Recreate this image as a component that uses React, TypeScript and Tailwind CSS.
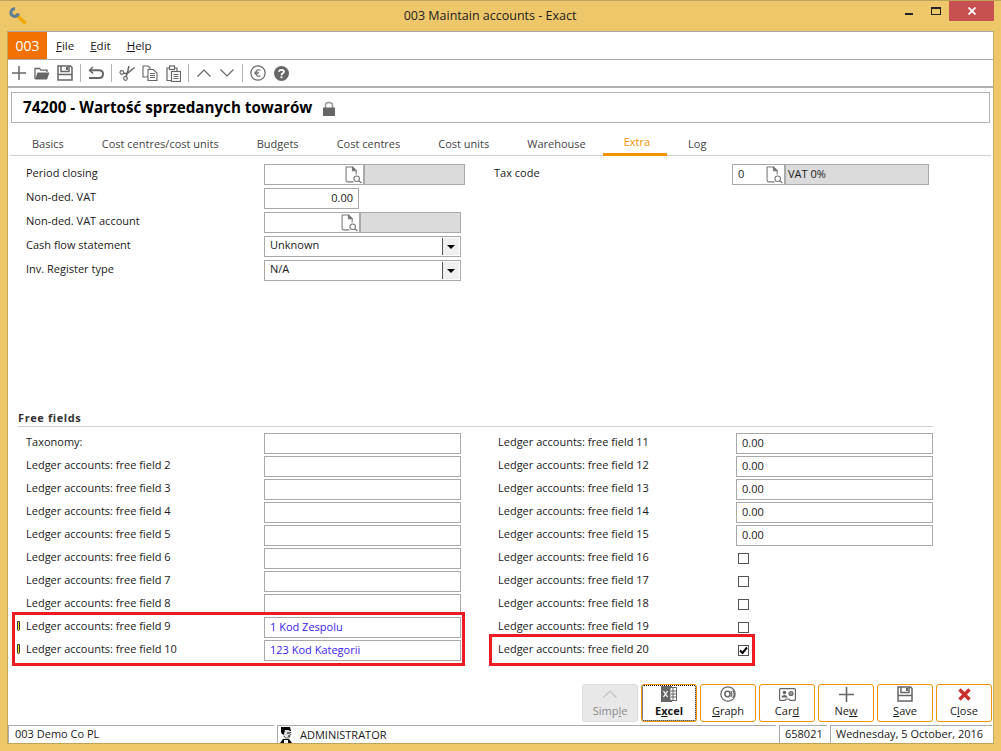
import React from 'react';

const Wrench = () => (
    <svg width="18" height="18" viewBox="0 0 18 18">
        <path d="M7.5 8 L15.5 15.5" stroke="#f0ab00" strokeWidth="3.6" strokeLinecap="round" />
        <path d="M6 1.8 A3.8 3.8 0 1 0 9.4 6.4" fill="none" stroke="#5f7d99" strokeWidth="3" />
    </svg>
);

const PlusIcon = ({ size = 14 }: { size?: number }) => (
    <svg width={size} height={size} viewBox="0 0 14 14">
        <path d="M7 0 V14 M0 7 H14" stroke="#666" strokeWidth="1.5" />
    </svg>
);

const FolderIcon = () => (
    <svg width="16" height="13" viewBox="0 0 16 13" fill="none" stroke="#666" strokeWidth="1.3">
        <path d="M1 12 V1.5 H5.5 L7 3.2 H13 V5" />
        <path d="M1 12.5 L3.5 5.5 H15.5 L13 12.5 Z" fill="#666" stroke="none" />
    </svg>
);

const SaveIcon = ({ size = 16 }: { size?: number }) => (
    <svg width={size} height={size} viewBox="0 0 16 16" fill="none" stroke="#666" strokeWidth="1.5">
        <path d="M1 1 H13.5 L15 2.5 V15 H1 Z" />
        <path d="M4 1 V6.5 H12 V1" />
        <path d="M1 9.5 H15" />
        <rect x="9" y="2" width="2" height="3" fill="#666" stroke="none" />
    </svg>
);

const UndoIcon = () => (
    <svg width="16" height="14" viewBox="0 0 16 14" fill="none" stroke="#666" strokeWidth="2">
        <path d="M5 1 L1.5 4.2 L5 7.4" strokeWidth="1.5" />
        <path d="M2 4.2 H11 C13.5 4.2 15 5.8 15 8 C15 10.4 13.5 12 11 12 H1" />
    </svg>
);

const ScissorsIcon = () => (
    <svg width="16" height="16" viewBox="0 0 16 16" fill="none" stroke="#666" strokeWidth="1.2">
        <circle cx="2.8" cy="7.5" r="1.8" />
        <circle cx="6.5" cy="13.5" r="1.8" />
        <path d="M4.5 8.2 L8 8.6 L15.5 2.5" strokeWidth="1.5" />
        <path d="M7 11.8 L8.2 8.4 L10 1" strokeWidth="1.5" />
    </svg>
);

const CopyIcon = () => (
    <svg width="16" height="16" viewBox="0 0 16 16" fill="none" stroke="#666" strokeWidth="1.1">
        <path d="M1 1 H6 L8 3 V12 H1 Z" />
        <path d="M6 4.5 H11 L15 8 V15.5 H6 Z" fill="#fff" />
        <path d="M8 8.5 H13 M8 10.5 H13 M8 12.5 H13" />
    </svg>
);

const PasteIcon = () => (
    <svg width="15" height="17" viewBox="0 0 15 17" fill="none" stroke="#666" strokeWidth="1.2">
        <path d="M3 3 H1 V15.5 H5 M9 3 H11 V6" />
        <rect x="3.5" y="1" width="5" height="3.5" fill="#fff" />
        <rect x="5.5" y="6.5" width="9" height="10" fill="#fff" />
        <path d="M7.5 9.5 H12.5 M7.5 11.5 H12.5 M7.5 13.5 H12.5" />
    </svg>
);

const ChevronIcon = ({ down, color = '#666' }: { down?: boolean; color?: string }) => (
    <svg width="14" height="8" viewBox="0 0 14 8" fill="none" stroke={color} strokeWidth="1.2">
        <path d={down ? 'M0.5 0.5 L7 7 L13.5 0.5' : 'M0.5 7.5 L7 1 L13.5 7.5'} />
    </svg>
);

const EuroCircle = () => (
    <svg width="16" height="16" viewBox="0 0 17 17" fill="none" stroke="#666" strokeWidth="1.3">
        <circle cx="8.5" cy="8.5" r="7.6" />
        <path d="M11 5.6 C8.5 4.2 6 6 6 8.5 C6 11 8.5 12.8 11 11.4 M4.6 7.6 H9.6 M4.6 9.4 H9" strokeWidth="1.1" />
    </svg>
);

const HelpCircle = () => (
    <svg width="15" height="15" viewBox="0 0 16 16">
        <circle cx="8" cy="8" r="8" fill="#666" />
        <path d="M5.4 6.2 C5.4 3.4 10.6 3.4 10.6 6.2 C10.6 7.8 8 7.8 8 9.8" fill="none" stroke="#fff" strokeWidth="2" />
        <rect x="7" y="11" width="2" height="2" fill="#fff" />
    </svg>
);

const LockIcon = () => (
    <svg width="12" height="15" viewBox="0 0 12 15" className="mt-[2px]">
        <path d="M2.5 7 V4 C2.5 0.5 9.5 0.5 9.5 4 V7" fill="none" stroke="#999" strokeWidth="1.5" />
        <rect x="0" y="6.5" width="12" height="8.5" fill="#666" />
    </svg>
);

const LookupIcon = () => (
    <svg width="17" height="18" viewBox="0 0 16 17" fill="none" stroke="#777" strokeWidth="1">
        <path d="M8 15 H2.5 C1.7 15 1 14.4 1 13.6 V1 H7 L10.5 4.5 V8" />
        <path d="M7 1 V4.5 H10.5 Z" fill="#777" />
        <circle cx="11" cy="12" r="2.6" />
        <path d="M13 14 L15.5 16" strokeWidth="1.3" />
    </svg>
);

const ExcelIcon = () => (
    <svg width="16" height="16" viewBox="0 0 16 16">
        <rect x="0" y="0" width="11" height="16" fill="#666" />
        <rect x="9" y="1.5" width="6.5" height="13" fill="#fff" stroke="#666" />
        <path d="M10 5 H15 M10 8 H15 M10 11 H15 M12 2 V14" stroke="#666" />
        <path d="M2.5 5 L6.5 11 M6.5 5 L2.5 11" stroke="#fff" strokeWidth="1.3" />
    </svg>
);

const GraphIcon = () => (
    <svg width="16" height="16" viewBox="0 0 17 17" fill="none" stroke="#666" strokeWidth="1.3">
        <circle cx="8.5" cy="8.5" r="7.6" />
        <circle cx="8" cy="8.5" r="2.8" strokeWidth="1.6" />
        <path d="M11.5 5.5 C13 7 13 10 11.5 11.5 M13.5 4.5 C15.5 7 15.5 10 13.5 12.5" />
    </svg>
);

const CardIcon = () => (
    <svg width="17" height="13" viewBox="0 0 17 13" fill="none" stroke="#666" strokeWidth="1.2">
        <path d="M0.6 1.5 Q0.6 0.6 1.5 0.6 H15.5 Q16.4 0.6 16.4 1.5 V11.5 Q16.4 12.4 15.5 12.4 H11 L10 11 H7 L6 12.4 H1.5 Q0.6 12.4 0.6 11.5 Z" />
        <circle cx="5.5" cy="4.5" r="1.8" fill="#666" stroke="none" />
        <path d="M2.5 9.5 C2.5 6 8.5 6 8.5 9.5 Z" fill="#666" stroke="none" />
        <circle cx="12" cy="5.5" r="2" fill="#999" />
    </svg>
);

const CloseIcon = () => (
    <svg width="13" height="13" viewBox="0 0 13 13">
        <path d="M1.5 1.5 L11.5 11.5 M11.5 1.5 L1.5 11.5" stroke="#c9302c" strokeWidth="3.4" />
    </svg>
);

const UserIcon = () => (
    <svg width="13" height="16" viewBox="0 0 13 16">
        <path d="M3 2 H10 L11 7 L9 11 H5 L3 7 Z" fill="#ddd" stroke="#000" strokeDasharray="1 1" />
        <path d="M1 0 H10 L11 4 L8 3 H5 L4 7 H2 L1 5 Z" fill="#000" />
        <path d="M7 6 H10 M8 9 H10" stroke="#000" />
        <path d="M0 16 L3 12 H9 L12 16 Z" fill="#000" />
        <path d="M4 13 H8 V16 H4 Z" fill="#fff" />
    </svg>
);

const Sep = () => <div className="w-px h-[18px] bg-[#b0b0b0] mx-[7px]" />;

const Input = ({ w, value, right, blue }: { w: string; value?: string; right?: boolean; blue?: boolean }) => (
    <div
        className={`${w} h-[21px] shrink-0 border border-[#a9a9a9] bg-white px-[5px] flex items-center ${right ? 'justify-end' : ''} ${blue ? 'text-[#3b22f0]' : ''}`}
    >
        {value}
    </div>
);

const Lookup = ({ w, value }: { w: string; value?: string }) => (
    <div className={`${w} h-[21px] shrink-0 border border-[#a9a9a9] bg-white pl-[5px] pr-px flex items-center justify-between`}>
        <span>{value}</span>
        <LookupIcon />
    </div>
);

const Grey = ({ w, value }: { w: string; value?: string }) => (
    <div className={`${w} h-[21px] shrink-0 border border-[#a9a9a9] bg-[#dbdbdb] px-[2px] flex items-center`}>{value}</div>
);

const Select = ({ value }: { value: string }) => (
    <div className="w-[197px] h-[21px] border border-[#a9a9a9] bg-white pl-[5px] flex items-center justify-between">
        <span className="-mt-[2px]">{value}</span>
        <div className="w-[17px] h-[17px] mr-px flex items-center justify-center bg-[#f0f0f0] border-l border-[#555]">
            <div className="w-0 h-0 border-l-[4px] border-r-[4px] border-t-[4px] border-l-transparent border-r-transparent border-t-black" />
        </div>
    </div>
);

const Row = ({ label, mark, children }: { label: string; mark?: boolean; children: React.ReactNode }) => (
    <div className="flex items-center h-[21px]">
        <div className="relative w-[246px] pl-[8px] -mt-[2px]">
            {mark && <span className="absolute left-[-1px] top-[3px] w-[3px] h-[10px] bg-[#f2e200] border border-[#333] rounded-b-full" />}
            {label}
        </div>
        {children}
    </div>
);

const RightRow = ({ label, children }: { label: string; children: React.ReactNode }) => (
    <div className="flex items-center h-[21px]">
        <div className="w-[238px] -mt-[2px]">{label}</div>
        {children}
    </div>
);

const Check = ({ checked }: { checked?: boolean }) => (
    <div className="ml-[2px] w-[11px] h-[11px] border border-[#555] bg-white flex items-center justify-center">
        {checked && (
            <svg width="9" height="9" viewBox="0 0 9 9">
                <path d="M1 4.5 L3.5 7 L8 1.5" fill="none" stroke="#000" strokeWidth="2" />
            </svg>
        )}
    </div>
);

const ActionButton = ({ icon, children, disabled, focused }: { icon: React.ReactNode; children: React.ReactNode; disabled?: boolean; focused?: boolean }) => (
    <div
        className={`w-[56px] h-[38px] rounded-[3px] border flex flex-col items-center ${
            disabled ? 'border-[#dcdcdc] bg-[#e8e8e8] text-[#8a8a8a]' : 'border-[#f39200] bg-white'
        } ${focused ? 'outline-1 outline-dotted outline-black -outline-offset-2 font-bold' : ''}`}
    >
        <div className="h-[18px] flex items-center justify-center">{icon}</div>
        <div className="leading-[15px]">{children}</div>
    </div>
);

const tabs = ['Basics', 'Cost centres/cost units', 'Budgets', 'Cost centres', 'Cost units', 'Warehouse', 'Extra', 'Log'];

export default function App() {
    return (
        <div className="w-[1001px] h-[751px] bg-[#efc76b] border-t border-[#c0a35a] flex flex-col overflow-hidden text-[11px] text-[#1a1a1a] font-['Open_Sans',sans-serif]">
            {/* title bar */}
            <div className="h-[30px] shrink-0 relative flex items-start">
                <div className="pl-[9px] pt-[6px]">
                    <Wrench />
                </div>
                <div className="absolute left-0 right-[21px] top-[6px] text-center text-[12.5px] leading-[18px] text-[#222]">003 Maintain accounts - Exact</div>
                <div className="ml-auto mr-[7px] flex items-start">
                    <div className="w-[8px] h-[2px] bg-[#222] mt-[12px] mr-[18px]" />
                    <div className="w-[10px] h-[8px] border border-t-2 border-[#222] mt-[6px] mr-[8px]" />
                    <div className="w-[45px] h-[20px] bg-[#c75050] text-white flex items-center justify-center">
                        <svg width="8" height="8" viewBox="0 0 8 8">
                            <path d="M0.5 0.5 L7.5 7.5 M7.5 0.5 L0.5 7.5" stroke="#fff" strokeWidth="1.8" />
                        </svg>
                    </div>
                </div>
            </div>

            {/* window body */}
            <div className="flex-1 mx-[7px] mb-[7px] border-t border-x border-b border-t-[#a8a8a8] border-x-[#c8a85c] border-b-[#c0a35a] bg-white flex flex-col min-h-0">
                {/* menu */}
                <div className="h-[28px] shrink-0 flex items-stretch border-b border-[#ababab]">
                    <div className="w-[39px] h-[27px] bg-[#f27100] text-white text-[14px] flex items-center justify-center">003</div>
                    <div className="flex items-center gap-[16px] pl-[9px] text-[11.5px]">
                        <span><u>F</u>ile</span>
                        <span><u>E</u>dit</span>
                        <span><u>H</u>elp</span>
                    </div>
                </div>

                {/* toolbar */}
                <div className="h-[28px] shrink-0 flex items-center pl-[4px] border-b-2 border-[#b0b0b0]">
                    <div className="mr-[8px] flex"><PlusIcon /></div>
                    <div className="mr-[7px] flex"><FolderIcon /></div>
                    <SaveIcon />
                    <Sep />
                    <UndoIcon />
                    <Sep />
                    <div className="mr-[7px] flex"><ScissorsIcon /></div>
                    <div className="mr-[8px] flex"><CopyIcon /></div>
                    <PasteIcon />
                    <Sep />
                    <div className="ml-px mr-[9px] flex"><ChevronIcon /></div>
                    <ChevronIcon down />
                    <div className="w-px h-[18px] bg-[#b0b0b0] ml-[8px] mr-[7px]" />
                    <div className="mr-[8px] flex"><EuroCircle /></div>
                    <HelpCircle />
                </div>

                {/* heading */}
                <div className="h-[31px] shrink-0 mx-[3px] mt-[4px] border border-[#b0b0b0] flex items-center pl-[11px] gap-[11px] text-[15.2px] font-bold text-black">
                    <span>74200 - Wartość sprzedanych towarów</span>
                    <LockIcon />
                </div>

                {/* tabs */}
                <div className="h-[23px] shrink-0 mt-[10px] mx-[2px] flex items-end border-b border-[#cfcfcf] text-[#444]">
                    <div className="flex pl-[3px]">
                        {tabs.map((t) => (
                            <div
                                key={t}
                                className={`h-[23px] flex items-center -mb-px ${t === 'Extra' ? '-ml-[2px] mr-[2px] pl-[21px] pr-[17px] border-b-[3px] border-[#f39200] text-[#f39200] pb-px' : 'px-[19px]'}`}
                            >
                                {t}
                            </div>
                        ))}
                    </div>
                </div>

                {/* top form */}
                <div className="h-[255px] shrink-0 pt-[8px] pl-[10px] flex">
                    <div className="flex flex-col gap-[3px] w-[466px]">
                        <Row label="Period closing">
                            <Lookup w="w-[100px]" />
                            <Grey w="w-[101px]" />
                        </Row>
                        <Row label="Non-ded. VAT">
                            <Input w="w-[95px]" value="0.00" right />
                        </Row>
                        <Row label="Non-ded. VAT account">
                            <Lookup w="w-[96px]" />
                            <Grey w="w-[101px]" />
                        </Row>
                        <Row label="Cash flow statement">
                            <Select value="Unknown" />
                        </Row>
                        <Row label="Inv. Register type">
                            <Select value="N/A" />
                        </Row>
                    </div>
                    <div className="flex h-[21px] items-center">
                        <div className="w-[248px] pl-[10px] -mt-[2px]">Tax code</div>
                        <Lookup w="w-[53px]" value="0" />
                        <Grey w="w-[144px]" value="VAT 0%" />
                    </div>
                </div>

                {/* free fields */}
                <div className="ml-[10px] mr-[60px] h-[16px] flex items-end border-b border-[#cfcfcf] font-bold tracking-[0.6px] text-[#333] leading-[14px] pb-px">Free fields</div>
                <div className="relative pl-[10px] pt-[6px] flex">
                    <div className="flex flex-col gap-[2px] w-[480px]">
                        <Row label="Taxonomy:"><Input w="w-[197px]" /></Row>
                        <Row label="Ledger accounts: free field 2"><Input w="w-[197px]" /></Row>
                        <Row label="Ledger accounts: free field 3"><Input w="w-[197px]" /></Row>
                        <Row label="Ledger accounts: free field 4"><Input w="w-[197px]" /></Row>
                        <Row label="Ledger accounts: free field 5"><Input w="w-[197px]" /></Row>
                        <Row label="Ledger accounts: free field 6"><Input w="w-[197px]" /></Row>
                        <Row label="Ledger accounts: free field 7"><Input w="w-[197px]" /></Row>
                        <Row label="Ledger accounts: free field 8"><Input w="w-[197px]" /></Row>
                        <Row label="Ledger accounts: free field 9" mark><Input w="w-[197px]" value="1 Kod Zespolu" blue /></Row>
                        <Row label="Ledger accounts: free field 10" mark><Input w="w-[197px]" value="123 Kod Kategorii" blue /></Row>
                    </div>
                    <div className="flex flex-col gap-[2px]">
                        <RightRow label="Ledger accounts: free field 11"><Input w="w-[197px]" value="0.00" /></RightRow>
                        <RightRow label="Ledger accounts: free field 12"><Input w="w-[197px]" value="0.00" /></RightRow>
                        <RightRow label="Ledger accounts: free field 13"><Input w="w-[197px]" value="0.00" /></RightRow>
                        <RightRow label="Ledger accounts: free field 14"><Input w="w-[197px]" value="0.00" /></RightRow>
                        <RightRow label="Ledger accounts: free field 15"><Input w="w-[197px]" value="0.00" /></RightRow>
                        <RightRow label="Ledger accounts: free field 16"><Check /></RightRow>
                        <RightRow label="Ledger accounts: free field 17"><Check /></RightRow>
                        <RightRow label="Ledger accounts: free field 18"><Check /></RightRow>
                        <RightRow label="Ledger accounts: free field 19"><Check /></RightRow>
                        <RightRow label="Ledger accounts: free field 20"><Check checked /></RightRow>
                    </div>

                    {/* red highlight boxes */}
                    <div className="absolute left-[4px] top-[185px] w-[453px] h-[54px] border-[3px] border-[#ed1c24]" />
                    <div className="absolute left-[481px] top-[207px] w-[266px] h-[32px] border-[3px] border-[#ed1c24]" />
                </div>

                {/* buttons */}
                <div className="mt-auto flex justify-end gap-[3px] pr-px mb-[3px]">
                    <ActionButton disabled icon={<ChevronIcon color="#c4c4c4" />}>Simp<u>l</u>e</ActionButton>
                    <ActionButton focused icon={<ExcelIcon />}>E<u>x</u>cel</ActionButton>
                    <ActionButton icon={<GraphIcon />}><u>G</u>raph</ActionButton>
                    <ActionButton icon={<CardIcon />}>Car<u>d</u></ActionButton>
                    <ActionButton icon={<PlusIcon size={15} />}>Ne<u>w</u></ActionButton>
                    <ActionButton icon={<SaveIcon />}><u>S</u>ave</ActionButton>
                    <ActionButton icon={<CloseIcon />}>C<u>l</u>ose</ActionButton>
                </div>

                {/* status bar */}
                <div className="h-[18px] shrink-0 flex gap-[3px] mr-[1px] leading-[16px]">
                    <div className="w-[266px] border-t border-l border-[#ababab] pl-[6px]">003 Demo Co PL</div>
                    <div className="flex-1 border-t border-l border-[#ababab] flex items-center gap-[7px] pl-[2px] overflow-hidden">
                        <UserIcon />
                        <span>ADMINISTRATOR</span>
                    </div>
                    <div className="w-[48px] border-t border-l border-[#ababab] pl-[5px]">658021</div>
                    <div className="w-[162px] border-t border-l border-[#ababab] pl-[5px] whitespace-nowrap">Wednesday, 5 October, 2016</div>
                </div>
            </div>
        </div>
    );
}
